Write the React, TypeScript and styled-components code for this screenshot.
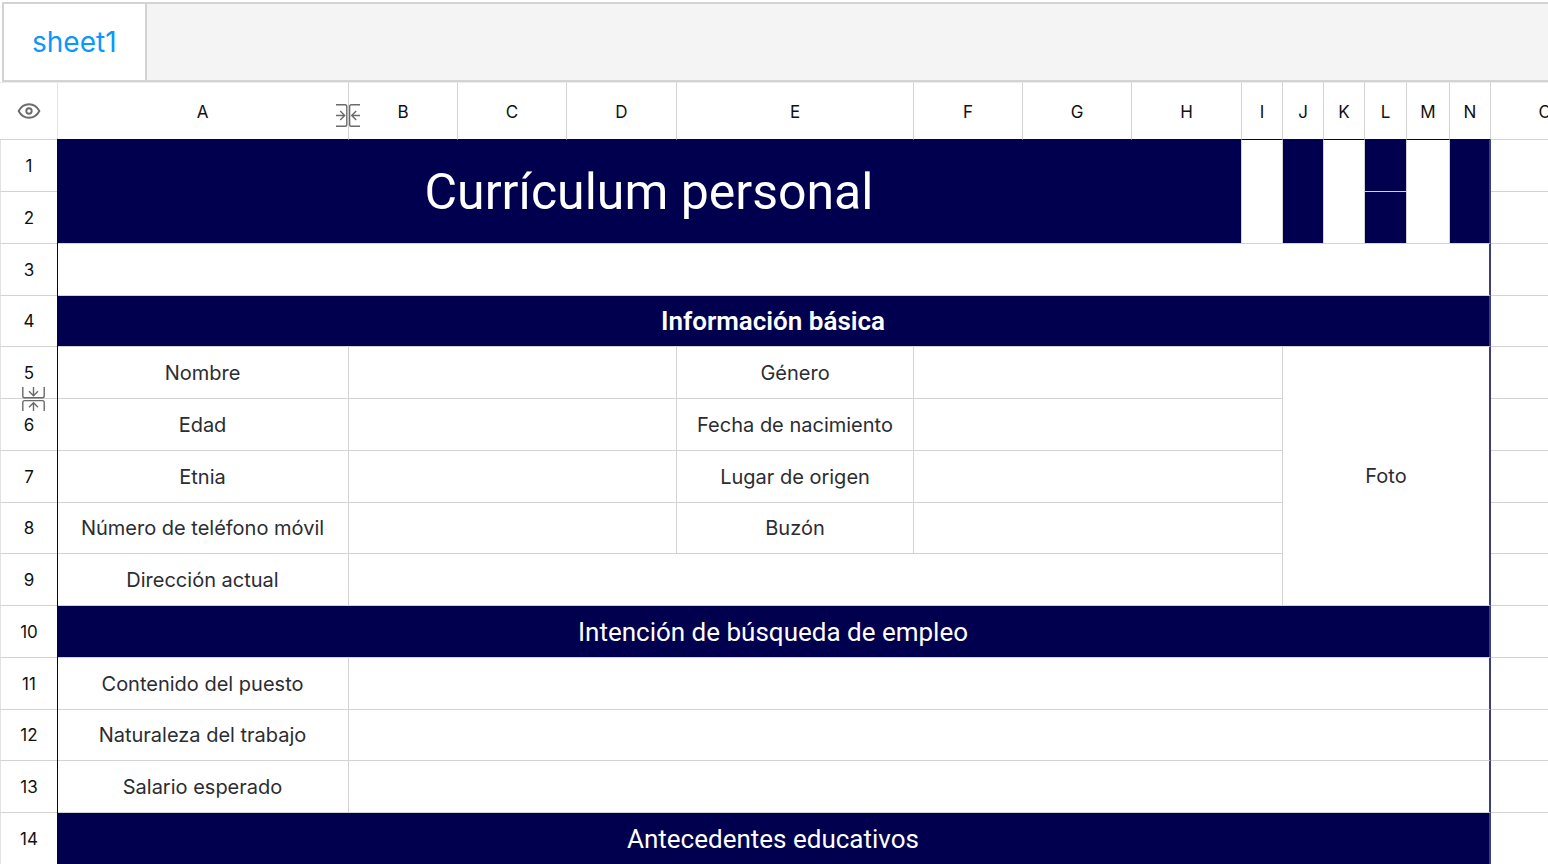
import React from "react";
import styled, { createGlobalStyle, css } from "styled-components";

const NAVY = "#00004f";
const NAVY_EDGE = "#3e3e7c";
const LINE = "#d3d3d3";

const GlobalStyle = createGlobalStyle`
  * { box-sizing: border-box; }
  body {
    margin: 0;
    background: #fff;
    font-family: Inter, "Liberation Sans", sans-serif;
  }
`;

const Page = styled.main`
  height: 100vh;
  overflow: hidden;
`;

const TabBar = styled.nav`
  display: flex;
  height: 80px;
  margin: 2px 0 0 2px;
  border: 2px solid ${LINE};
  border-right: 0;
  background: #f4f4f4;
`;

const Tab = styled.button`
  padding: 0 28px;
  border: 0;
  border-right: 2px solid ${LINE};
  background: #fff;
  color: #0b97fb;
  font: 400 28px/32px Inter, sans-serif;
`;

const Sheet = styled.table`
  width: 1600px;
  table-layout: fixed;
  border-collapse: separate;
  border-spacing: 0;
`;

const Col = styled.col<{ $w: number }>`
  width: ${(p) => p.$w}px;
`;

const HeadRow = styled.tr`
  height: 58px;
`;

const Row = styled.tr`
  height: 52px;
  &:nth-child(4n) {
    height: 51px;
  }
`;

const header = css`
  position: relative;
  padding: 0;
  color: #111;
  font-size: 17px;
  line-height: 20px;
  font-weight: 400;
  text-align: center;
  vertical-align: middle;
`;

const Corner = styled.th`
  ${header}
  border-top: 1px solid #ebebeb;
  border-bottom: 1px solid ${LINE};
  box-shadow: 1px 0 0 #e4e4e4;
`;

const ColHead = styled.th<{ $inside: boolean }>`
  ${header}
  padding-top: 2px;
  border-top: 1px solid #ebebeb;
  border-right: 1px solid ${LINE};
  border-bottom: 1px solid ${(p) => (p.$inside ? NAVY : LINE)};
`;

const RowHead = styled.th`
  ${header}
  border-left: 1px solid #e2e2e2;
  border-bottom: 1px solid ${LINE};
  box-shadow: 1px 0 0 ${NAVY};
`;

type Tone = "plain" | "title" | "section" | "strong";

const banner = css`
  background: ${NAVY};
  color: #fff;
  font-family: Roboto, sans-serif;
  font-size: 26px;
  line-height: 32px;
`;

const tones = {
  plain: css`
    color: #2b2d31;
    font-size: 20px;
    line-height: 24px;
  `,
  title: css`
    ${banner}
    font-size: 50px;
    line-height: 60px;
  `,
  section: banner,
  strong: css`
    ${banner}
    font-weight: 600;
  `,
};

const Cell = styled.td<{ $tone: Tone; $edge?: boolean }>`
  padding: 0;
  border-right: ${(p) => (p.$edge ? `2px solid ${NAVY_EDGE}` : `1px solid ${LINE}`)};
  border-bottom: 1px solid ${LINE};
  text-align: center;
  vertical-align: middle;
  white-space: nowrap;
  ${(p) => tones[p.$tone]}
`;

const IconButton = styled.button`
  display: flex;
  margin: 0 auto;
  padding: 0;
  border: 0;
  background: none;
  color: #6b6b6b;
`;

const ColumnHandle = styled(IconButton)`
  position: absolute;
  z-index: 1;
  top: 21px;
  right: -12px;
`;

const RowHandle = styled(IconButton)`
  position: absolute;
  z-index: 1;
  left: 20px;
  bottom: -13px;
`;

const EyeIcon = () => (
  <svg width="24" height="18" viewBox="0 0 24 18" fill="none" stroke="currentColor" strokeWidth="1.9" strokeLinejoin="round">
    <path d="M1.6 9C4 4.600 7.600 2.200 12 2.200S20 4.600 22.400 9C20 13.400 16.400 15.800 12 15.800S4 13.400 1.600 9Z" />
    <circle cx="12" cy="9" r="2.700" />
  </svg>
);

const collapsePaths = (
  <>
    <path d="M0 .8H9Q10.800 .8 10.800 2.600V20.400Q10.800 22.200 9 22.200H0" />
    <path d="M0 11.500H8.500M4.200 7L8.700 11.500L4.200 16" />
    <path d="M24 .8H15.400Q13.600 .8 13.600 2.600V20.400Q13.600 22.200 15.400 22.200H24" />
    <path d="M24 11.500H15.900M20.200 7L15.700 11.500L20.200 16" />
  </>
);

const CollapseColumnsIcon = () => (
  <svg width="24" height="24" viewBox="0 0 24 24" fill="none" stroke="currentColor" strokeWidth="1.4">
    {collapsePaths}
  </svg>
);

const CollapseRowsIcon = () => (
  <svg width="24" height="24" viewBox="0 0 24 24" fill="none" stroke="currentColor" strokeWidth="1.4">
    <g transform="matrix(0 1 1 0 1 0)">{collapsePaths}</g>
  </svg>
);

const columns = [
  { name: "A", w: 292 },
  { name: "B", w: 109 },
  { name: "C", w: 109 },
  { name: "D", w: 110 },
  { name: "E", w: 237 },
  { name: "F", w: 109 },
  { name: "G", w: 109 },
  { name: "H", w: 110 },
  { name: "I", w: 41 },
  { name: "J", w: 41 },
  { name: "K", w: 41 },
  { name: "L", w: 42 },
  { name: "M", w: 43 },
  { name: "N", w: 41 },
  { name: "O", w: 109 },
];

interface CellData {
  text?: string;
  cols?: number;
  rows?: number;
  tone?: Tone;
  edge?: boolean;
}

const rows: CellData[][] = [
  [
    { text: "Currículum personal", cols: 8, rows: 2, tone: "title" },
    { rows: 2 },
    { rows: 2, tone: "section" },
    { rows: 2 },
    { tone: "section" },
    { rows: 2 },
    { rows: 2, tone: "section", edge: true },
  ],
  [{ tone: "section" }],
  [{ cols: 14, edge: true }],
  [{ text: "Información básica", cols: 14, tone: "strong", edge: true }],
  [
    { text: "Nombre" },
    { cols: 3 },
    { text: "Género" },
    { cols: 4 },
    { text: "Foto", cols: 5, rows: 5, edge: true },
  ],
  [{ text: "Edad" }, { cols: 3 }, { text: "Fecha de nacimiento" }, { cols: 4 }],
  [{ text: "Etnia" }, { cols: 3 }, { text: "Lugar de origen" }, { cols: 4 }],
  [{ text: "Número de teléfono móvil" }, { cols: 3 }, { text: "Buzón" }, { cols: 4 }],
  [{ text: "Dirección actual" }, { cols: 8 }],
  [{ text: "Intención de búsqueda de empleo", cols: 14, tone: "section", edge: true }],
  [{ text: "Contenido del puesto" }, { cols: 13, edge: true }],
  [{ text: "Naturaleza del trabajo" }, { cols: 13, edge: true }],
  [{ text: "Salario esperado" }, { cols: 13, edge: true }],
  [{ text: "Antecedentes educativos", cols: 14, tone: "section", edge: true }],
];

export default function App() {
  return (
    <Page>
      <GlobalStyle />
      <TabBar>
        <Tab type="button">sheet1</Tab>
      </TabBar>
      <Sheet>
        <colgroup>
          <Col $w={57} />
          {columns.map((c) => (
            <Col key={c.name} $w={c.w} />
          ))}
        </colgroup>
        <thead>
          <HeadRow>
            <Corner>
              <IconButton type="button" aria-label="Mostrar u ocultar">
                <EyeIcon />
              </IconButton>
            </Corner>
            {columns.map((c) => (
              <ColHead key={c.name} scope="col" $inside={c.name !== "O"}>
                {c.name}
                {c.name === "A" && (
                  <ColumnHandle type="button" aria-label="Contraer columnas">
                    <CollapseColumnsIcon />
                  </ColumnHandle>
                )}
              </ColHead>
            ))}
          </HeadRow>
        </thead>
        <tbody>
          {rows.map((cells, r) => (
            <Row key={r}>
              <RowHead scope="row">
                {r + 1}
                {r === 4 && (
                  <RowHandle type="button" aria-label="Contraer filas">
                    <CollapseRowsIcon />
                  </RowHandle>
                )}
              </RowHead>
              {cells.map((c, i) => (
                <Cell key={i} colSpan={c.cols} rowSpan={c.rows} $tone={c.tone ?? "plain"} $edge={c.edge}>
                  {c.text}
                </Cell>
              ))}
              <Cell $tone="plain" />
            </Row>
          ))}
        </tbody>
      </Sheet>
    </Page>
  );
}
